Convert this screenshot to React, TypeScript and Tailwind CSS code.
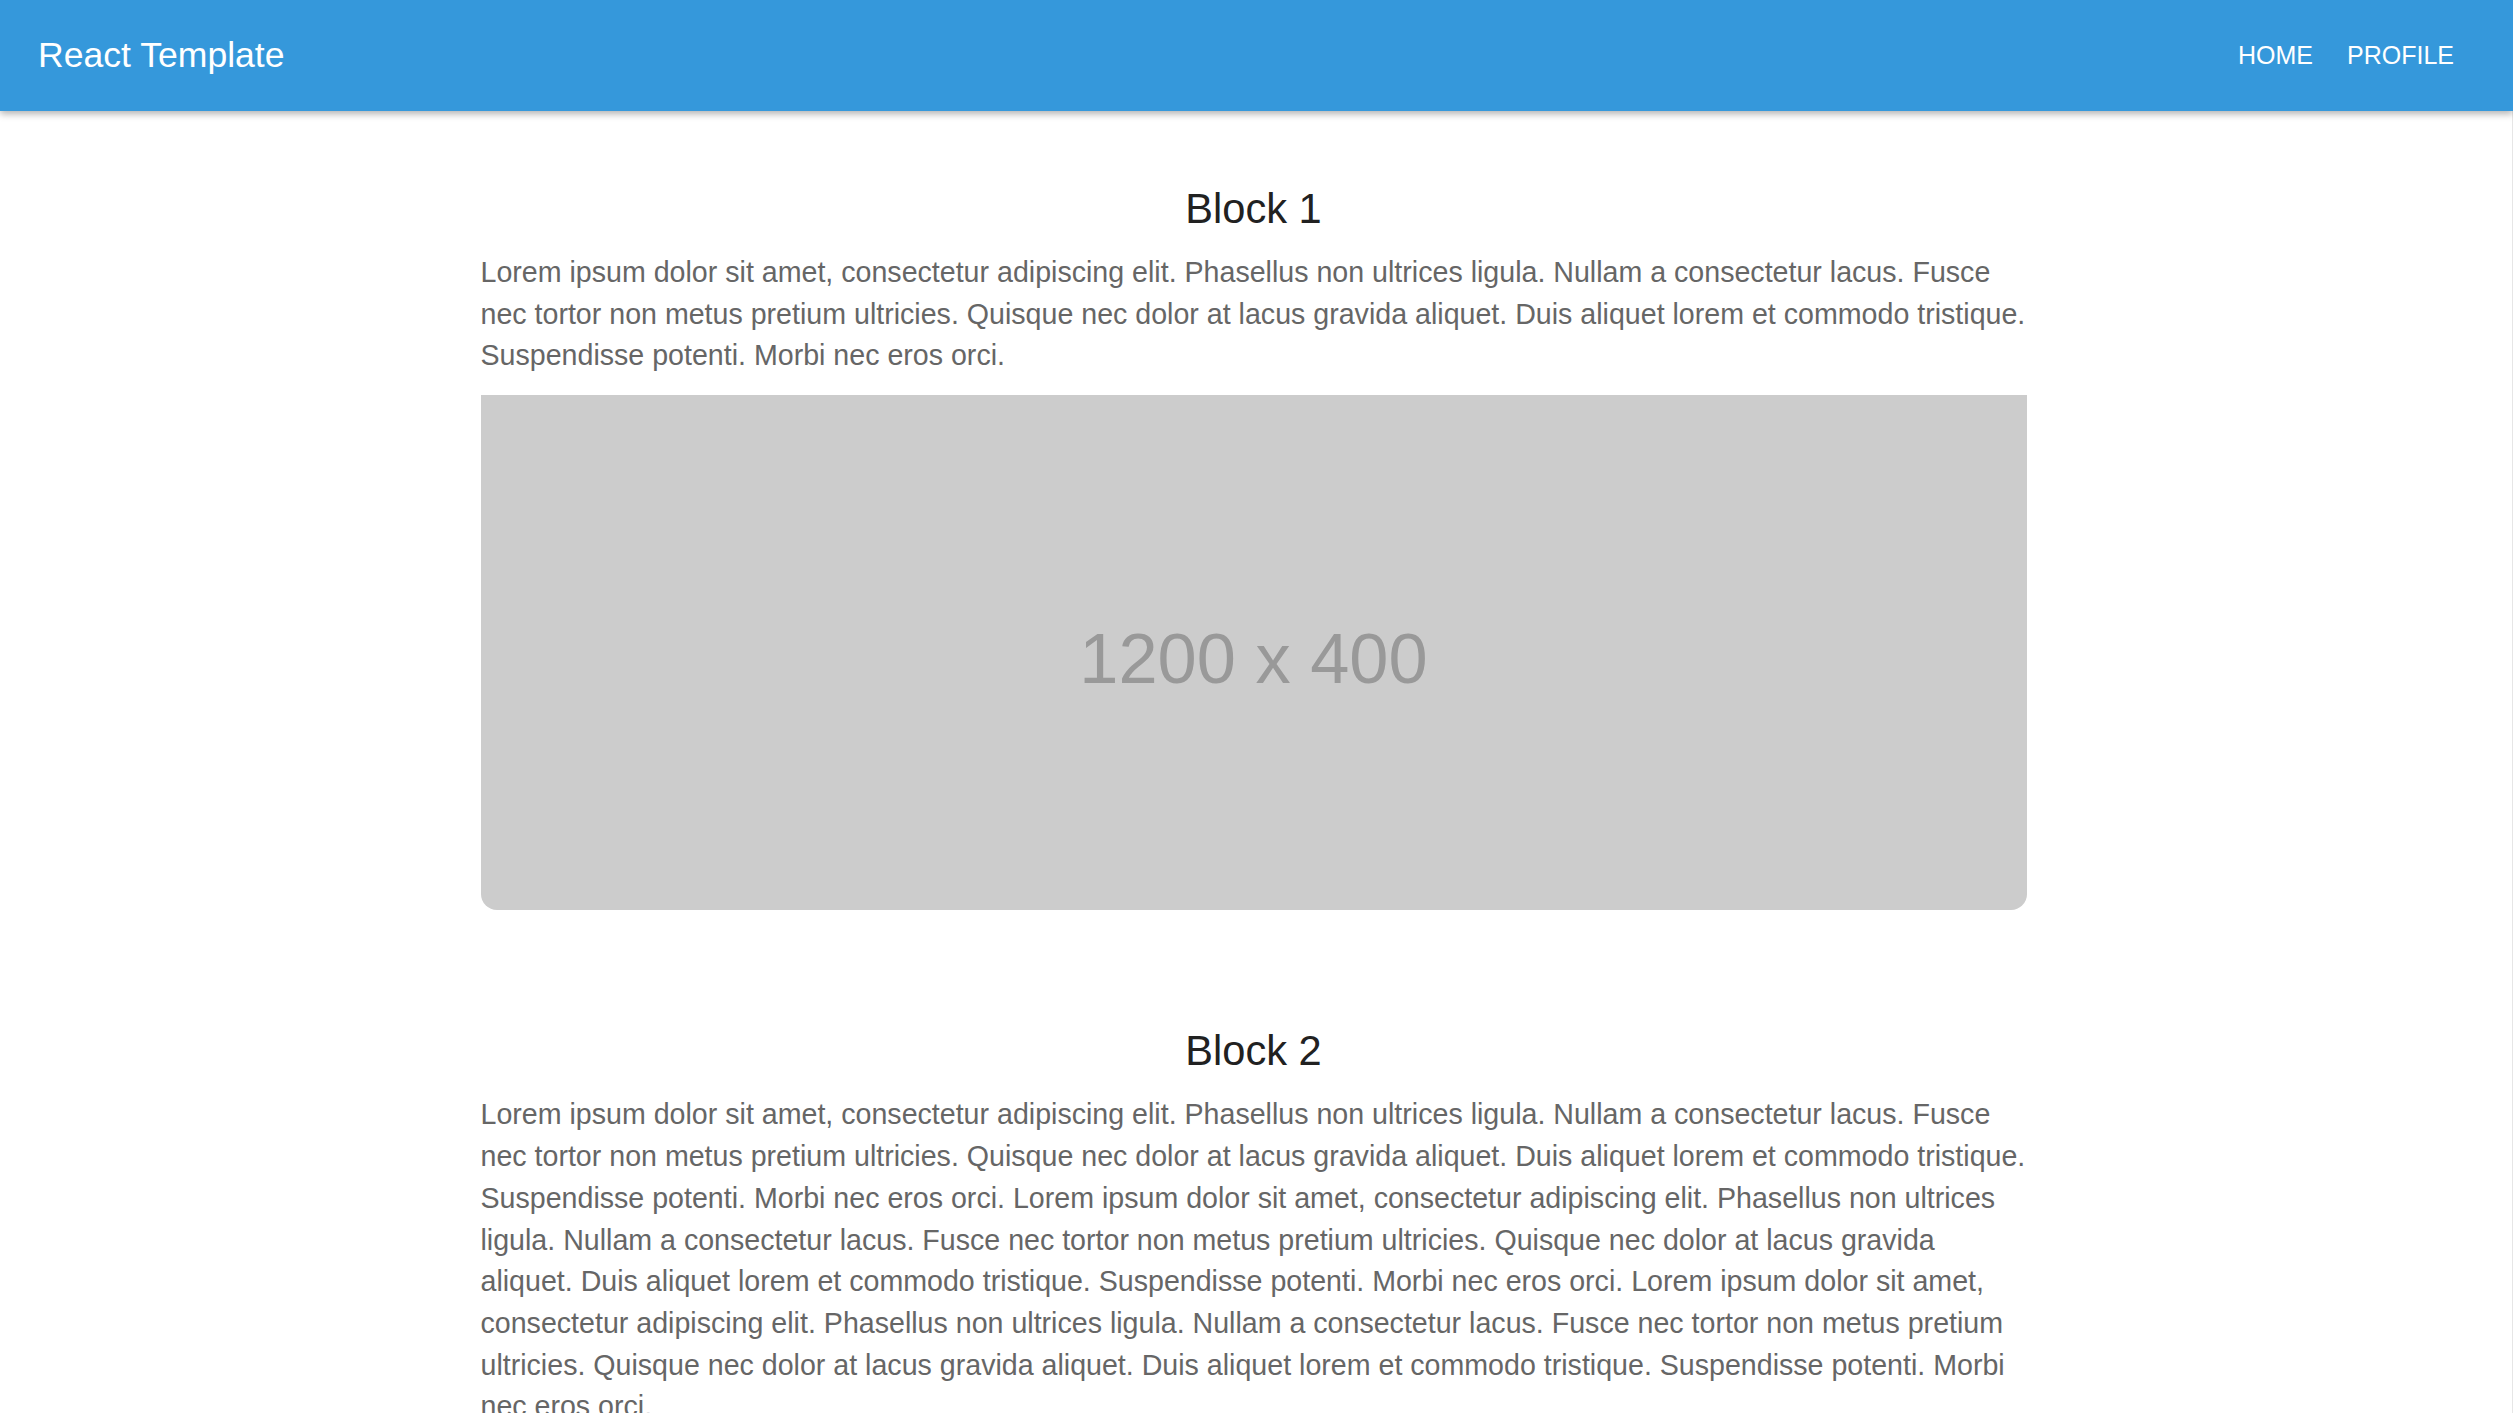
import React from "react";

const LOREM =
  "Lorem ipsum dolor sit amet, consectetur adipiscing elit. Phasellus non ultrices ligula. Nullam a consectetur lacus. Fusce nec tortor non metus pretium ultricies. Quisque nec dolor at lacus gravida aliquet. Duis aliquet lorem et commodo tristique. Suspendisse potenti. Morbi nec eros orci.";

function Block({ title, text, image }: { title: string; text: string; image?: boolean }) {
  return (
    <section className="flex flex-col">
      <h2 className="text-center text-[41.6px] leading-[48px] text-[#212121] font-normal">{title}</h2>
      <p className="mt-[19px] text-[28.6px] leading-[41.7px] text-[#666666]">{text}</p>
      {image && (
        <div className="mt-[18px] w-full aspect-[3/1] bg-[#cccccc] rounded-b-[16px] flex items-center justify-center">
          <span className="text-[70.4px] leading-none text-[#999999] pt-[12px]">1200 x 400</span>
        </div>
      )}
    </section>
  );
}

export default function App() {
  return (
    <div
      className="min-h-screen bg-white"
      style={{ fontFamily: '"Liberation Sans", Arial, Helvetica, sans-serif' }}
    >
      <header className="relative z-10 h-[111px] bg-[#3598db] flex items-center justify-between pl-[38px] pr-[59px] shadow-[0_3px_7px_rgba(0,0,0,0.3)]">
        <div className="text-[35.6px] text-white">React Template</div>
        <nav className="flex items-center gap-[34px] text-[25px] text-white">
          <a>HOME</a>
          <a>PROFILE</a>
        </nav>
      </header>
      <main className="pr-[5px] border-r border-[#e6e6e6]">
        <div className="w-[1546px] mx-auto pt-[74px] flex flex-col gap-[117px]">
          <Block title="Block 1" text={LOREM} image />
          <Block title="Block 2" text={`${LOREM} ${LOREM} ${LOREM}`} />
        </div>
      </main>
    </div>
  );
}
